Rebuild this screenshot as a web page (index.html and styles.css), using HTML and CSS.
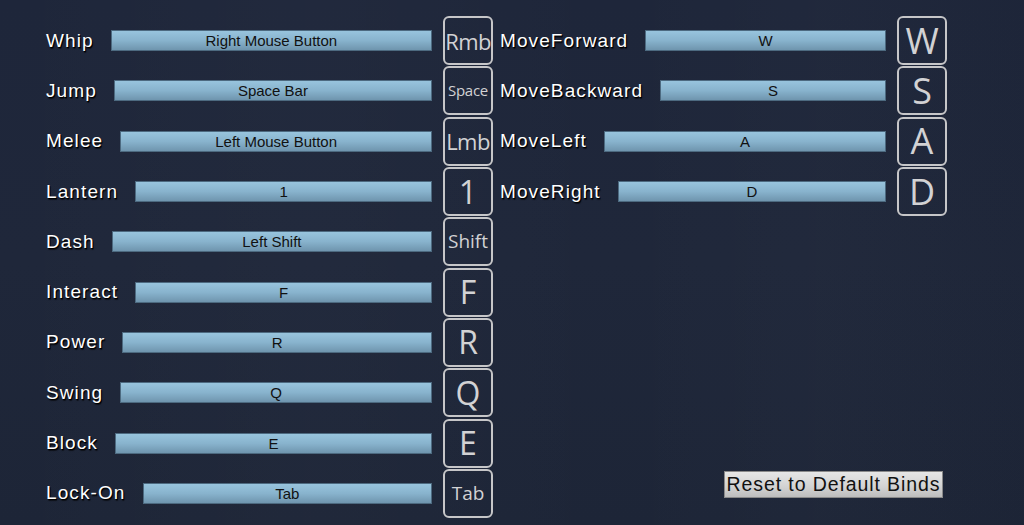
FILE: index.html
```html
<!DOCTYPE html>
<html>
<head>
<meta charset="utf-8">
<link rel="stylesheet" href="styles.css">
</head>
<body>
<div class="screen">
  <div class="col">
    <div class="row"><span class="label">Whip</span><div class="bar">Right Mouse Button</div><div class="key k-m">Rmb</div></div>
    <div class="row"><span class="label">Jump</span><div class="bar">Space Bar</div><div class="key k-s">Space</div></div>
    <div class="row"><span class="label">Melee</span><div class="bar">Left Mouse Button</div><div class="key k-m">Lmb</div></div>
    <div class="row"><span class="label">Lantern</span><div class="bar">1</div><div class="key k-l">1</div></div>
    <div class="row"><span class="label">Dash</span><div class="bar">Left Shift</div><div class="key k-sh">Shift</div></div>
    <div class="row"><span class="label">Interact</span><div class="bar">F</div><div class="key k-l">F</div></div>
    <div class="row"><span class="label">Power</span><div class="bar">R</div><div class="key k-l">R</div></div>
    <div class="row"><span class="label">Swing</span><div class="bar">Q</div><div class="key k-l">Q</div></div>
    <div class="row"><span class="label">Block</span><div class="bar">E</div><div class="key k-l">E</div></div>
    <div class="row"><span class="label">Lock-On</span><div class="bar">Tab</div><div class="key k-sh">Tab</div></div>
  </div>
  <div class="col">
    <div class="row"><span class="label">MoveForward</span><div class="bar">W</div><div class="key k-xl">W</div></div>
    <div class="row"><span class="label">MoveBackward</span><div class="bar">S</div><div class="key k-xl">S</div></div>
    <div class="row"><span class="label">MoveLeft</span><div class="bar">A</div><div class="key k-xl">A</div></div>
    <div class="row"><span class="label">MoveRight</span><div class="bar">D</div><div class="key k-xl">D</div></div>
    <button class="reset">Reset to Default Binds</button>
  </div>
</div>
</body>
</html>
```
FILE: styles.css
```css
html, body {
  margin: 0;
  padding: 0;
}
body {
  width: 1024px;
  height: 525px;
  overflow: hidden;
  background:
    linear-gradient(90deg, rgba(255,255,255,0) 0%, rgba(255,255,255,0.015) 30%, rgba(0,0,0,0) 60%, rgba(255,255,255,0.01) 80%, rgba(0,0,0,0.02) 100%),
    linear-gradient(180deg, #1e263a 0%, #1f273a 50%, #1d2537 100%);
  font-family: "Liberation Sans", Arial, sans-serif;
}
.screen {
  display: flex;
  gap: 7px;
  padding: 15.5px 0 0 46px;
  height: 503px;
}
.col {
  width: 447px;
  display: flex;
  flex-direction: column;
}
.row {
  height: 50.3px;
  flex: none;
  display: flex;
  align-items: center;
}
.label {
  color: #ffffff;
  font-size: 19px;
  letter-spacing: 1.1px;
  text-shadow: 1px 1px 0 #000, 1px 2px 1px rgba(0,0,0,0.6);
  white-space: nowrap;
  margin-right: 17px;
}
.bar {
  flex: 1;
  height: 19px;
  border: 1px solid #4d6a80;
  background: linear-gradient(180deg, #98c4dd 0%, #88b3cd 50%, #6f95ae 100%);
  color: #111;
  font-size: 15px;
  line-height: 19px;
  text-align: center;
  white-space: nowrap;
  margin-right: 11px;
}
.key {
  width: 46px;
  height: 45px;
  border: 2px solid #c6c6c8;
  border-radius: 6px;
  display: flex;
  align-items: center;
  justify-content: center;
  color: #d2d2d4;
  font-family: "Open Sans", "Noto Sans", sans-serif;
  line-height: 1;
  flex: none;
  overflow: visible;
  white-space: nowrap;
}
.k-s { font-size: 15px; letter-spacing: -0.3px; }
.k-m { font-size: 22px; letter-spacing: -0.6px; }
.k-sh { font-size: 19px; }
.k-l { font-size: 32px; }
.k-xl { font-size: 36px; }
.reset {
  margin-top: auto;
  margin-bottom: 21px;
  margin-right: 4px;
  align-self: flex-end;
  width: 219px;
  height: 27px;
  padding: 0;
  border: 1px solid #8a8a8a;
  background: linear-gradient(180deg, #e6e6e6 0%, #d2d2d2 60%, #bdbdbd 100%);
  color: #111;
  font-family: "Liberation Sans", Arial, sans-serif;
  font-size: 19.5px;
  letter-spacing: 0.9px;
  text-align: center;
  white-space: nowrap;
}
```
